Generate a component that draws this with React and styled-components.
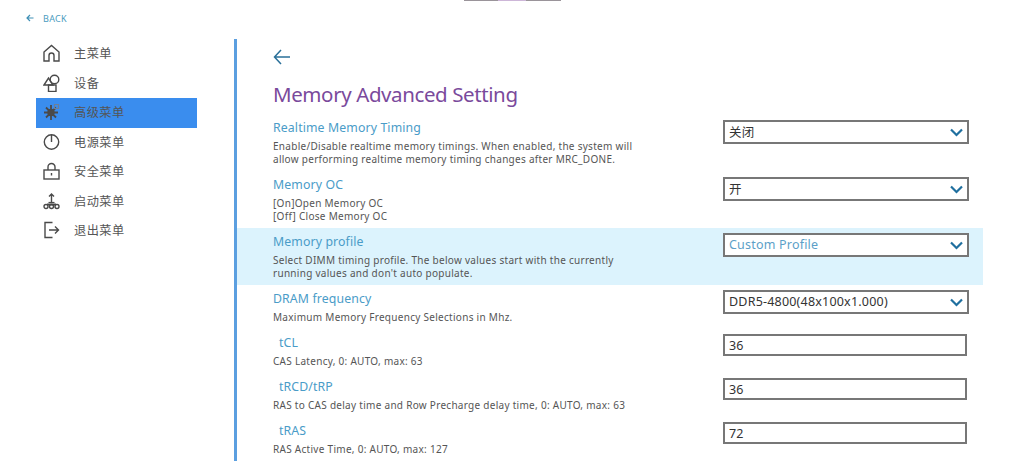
import styled, { createGlobalStyle } from "styled-components";

const Global = createGlobalStyle`
  html, body {
    margin: 0;
    padding: 0;
    background: #fff;
    overflow: hidden;
  }
  * { box-sizing: border-box; }
`;

const Page = styled.div`
  width: 1025px;
  height: 461px;
  overflow: hidden;
  font-family: "Noto Sans", "Noto Sans CJK SC", sans-serif;
`;

const TopMark = styled.div`
  width: 97px;
  height: 1px;
  margin-left: 464px;
  background: linear-gradient(90deg, #9a949a 0 34px, #cdb6d8 34px 62px, #9a949a 62px);
`;

const BackRow = styled.div`
  display: flex;
  align-items: center;
  gap: 9px;
  height: 12px;
  margin: 11px 0 0 26px;
  color: #4a9cc0;
  font-size: 9px;
  letter-spacing: 0.3px;
`;

const Body = styled.div`
  display: flex;
  margin-top: 15px;
`;

const Sidebar = styled.nav`
  width: 198px;
  margin-right: 0;
  margin-left: 36px;
  flex: none;
`;

const MenuItem = styled.div`
  display: flex;
  align-items: center;
  width: 161px;
  height: 29.5px;
  padding: 0 0 1px 7px;
  gap: 14px;
  color: #555;
  font-size: 12.2px;
  letter-spacing: 0.5px;
  background: ${(p) => (p.$active ? "#3a8dee" : "transparent")};
`;

const Main = styled.main`
  flex: 1;
  height: 422px;
  border-left: 3px solid #5b9fe0;
  padding-right: 42px;
`;

const Head = styled.div`
  padding: 9px 0 0 36px;
`;

const BackArrow = styled.div`
  height: 16px;
`;

const Title = styled.h1`
  margin: 16px 0 0;
  font-size: 20.5px;
  line-height: 28px;
  font-weight: 400;
  letter-spacing: -0.4px;
  color: #7a4a9c;
`;

const List = styled.div`
  margin-top: 6px;
`;

const Row = styled.div`
  display: flex;
  justify-content: space-between;
  height: ${(p) => p.$h}px;
  padding: 0 14px 0 36px;
  background: ${(p) => (p.$on ? "#dcf3fd" : "transparent")};
`;

const Info = styled.div`
  width: 400px;
  padding-top: 4px;
`;

const Label = styled.div`
  height: 20px;
  line-height: 20px;
  padding-left: ${(p) => (p.$sub ? 6 : 0)}px;
  font-size: 12.3px;
  letter-spacing: 0.12px;
  color: #4a9cc8;
`;

const Help = styled.div`
  margin-top: 2px;
  font-size: 10px;
  line-height: 13px;
  letter-spacing: 0.285px;
  color: #555;
`;

const Select = styled.div`
  display: flex;
  align-items: center;
  justify-content: space-between;
  width: 246px;
  height: 24px;
  margin-top: ${(p) => p.$top}px;
  padding: 0 4px;
  background: #fff;
  border: 2px solid #777;
  font-size: 12.5px;
  letter-spacing: 0.2px;
  color: ${(p) => (p.$accent ? "#5c9fc8" : "#333")};
`;

const Value = styled.span`
  margin-bottom: 2px;
`;

const NumberBox = styled.div`
  display: flex;
  align-items: center;
  width: 244px;
  height: 22px;
  margin: 5px 2px 0 0;
  padding-left: 4px;
  background: #fff;
  border: 2px solid #777;
  font-size: 12.5px;
  color: #333;
`;

const Chevron = () => (
  <svg width="13" height="9" viewBox="0 0 13 9" fill="none" stroke="#1f6f9f" strokeWidth="2.2">
    <path d="M1 1.5l5.5 5.5L12 1.5" />
  </svg>
);

const Ic = ({ children }) => (
  <svg width="17" height="18" viewBox="0 0 17 18" fill="none" stroke="#4a4a4a" strokeWidth="1.4">
    {children}
  </svg>
);

const menu = [
  ["主菜单", <path d="M1 8l7.5-6.5L16 8v9h-5v-5.5a2.5 2.5 0 0 0-5 0V17H1z" />],
  [
    "设备",
    <>
      <path d="M1 11l4.5-7 4.5 7z" />
      <circle cx="11.5" cy="5.5" r="4.3" />
      <rect x="5.5" y="11" width="7.5" height="6.5" />
    </>,
  ],
  [
    "高级菜单",
    <>
      <circle cx="8" cy="9.5" r="3" fill="#4a4a4a" />
      <path strokeWidth="1.8" d="M8 2v15M1 9.5h14M3 4.5l10 10M3 14.5l10-10" />
      <path strokeWidth="1.2" stroke="#6f7f95" d="M11.5 1.5h4v4h-4z" />
    </>,
  ],
  [
    "电源菜单",
    <>
      <circle cx="8.5" cy="9" r="7.2" />
      <path d="M8.5 2v7" />
    </>,
  ],
  [
    "安全菜单",
    <>
      <rect x="1" y="8" width="15" height="9" />
      <path d="M5 8V5a3.5 3.5 0 0 1 7 0v3M8.5 11v2.5" />
    </>,
  ],
  [
    "启动菜单",
    <>
      <path d="M8.5 10V2M6 4.5L8.5 2 11 4.5" />
      <path strokeWidth="2" d="M4 12.5h9" />
      <path strokeWidth="1.2" d="M5.5 10.5h6" />
      <circle cx="3" cy="14.5" r="2" />
      <circle cx="8.5" cy="14.5" r="2" />
      <circle cx="14" cy="14.5" r="2" />
    </>,
  ],
  [
    "退出菜单",
    <>
      <path d="M9.5 1.5H2v15h7.5" />
      <path d="M6 9h9.5M12 5.5L15.5 9 12 12.5" />
    </>,
  ],
];

const rows = [
  {
    h: 57,
    top: 6,
    label: "Realtime Memory Timing",
    help: ["Enable/Disable realtime memory timings. When enabled, the system will", "allow performing realtime memory timing changes after MRC_DONE."],
    value: "关闭",
  },
  { h: 57, top: 6, label: "Memory OC", help: ["[On]Open Memory OC", "[Off] Close Memory OC"], value: "开" },
  {
    h: 57,
    top: 5,
    on: true,
    accent: true,
    label: "Memory profile",
    help: ["Select DIMM timing profile. The below values start with the currently", "running values and don't auto populate."],
    value: "Custom Profile",
  },
  { h: 44, top: 5, label: "DRAM frequency", help: ["Maximum Memory Frequency Selections in Mhz."], value: "DDR5-4800(48x100x1.000)" },
  { h: 44, sub: true, label: "tCL", help: ["CAS Latency, 0: AUTO, max: 63"], value: "36" },
  { h: 44, sub: true, label: "tRCD/tRP", help: ["RAS to CAS delay time and Row Precharge delay time, 0: AUTO, max: 63"], value: "36" },
  { h: 44, sub: true, label: "tRAS", help: ["RAS Active Time, 0: AUTO, max: 127"], value: "72" },
];

export default function App() {
  return (
    <Page>
      <Global />
      <TopMark />
      <BackRow>
        <svg width="8" height="8" viewBox="0 0 8 8" fill="none" stroke="#3f8fb5" strokeWidth="1.2">
          <path d="M7.5 4H1M4 1L1 4l3 3" />
        </svg>
        BACK
      </BackRow>
      <Body>
        <Sidebar>
          {menu.map(([name, icon], i) => (
            <MenuItem key={name} $active={i === 2}>
              <Ic>{icon}</Ic>
              {name}
            </MenuItem>
          ))}
        </Sidebar>
        <Main>
          <Head>
            <BackArrow>
              <svg width="18" height="16" viewBox="0 0 18 16" fill="none" stroke="#2a7099" strokeWidth="1.5">
                <path d="M17 8H1.5M8 1L1.5 8 8 15" />
              </svg>
            </BackArrow>
            <Title>Memory Advanced Setting</Title>
          </Head>
          <List>
            {rows.map((r) => (
              <Row key={r.label} $h={r.h} $on={r.on}>
                <Info>
                  <Label $sub={r.sub}>{r.label}</Label>
                  <Help>
                    {r.help.map((t) => (
                      <div key={t}>{t}</div>
                    ))}
                  </Help>
                </Info>
                {r.sub ? (
                  <NumberBox>{r.value}</NumberBox>
                ) : (
                  <Select $accent={r.accent} $top={r.top}>
                    <Value>{r.value}</Value>
                    <Chevron />
                  </Select>
                )}
              </Row>
            ))}
          </List>
        </Main>
      </Body>
    </Page>
  );
}
